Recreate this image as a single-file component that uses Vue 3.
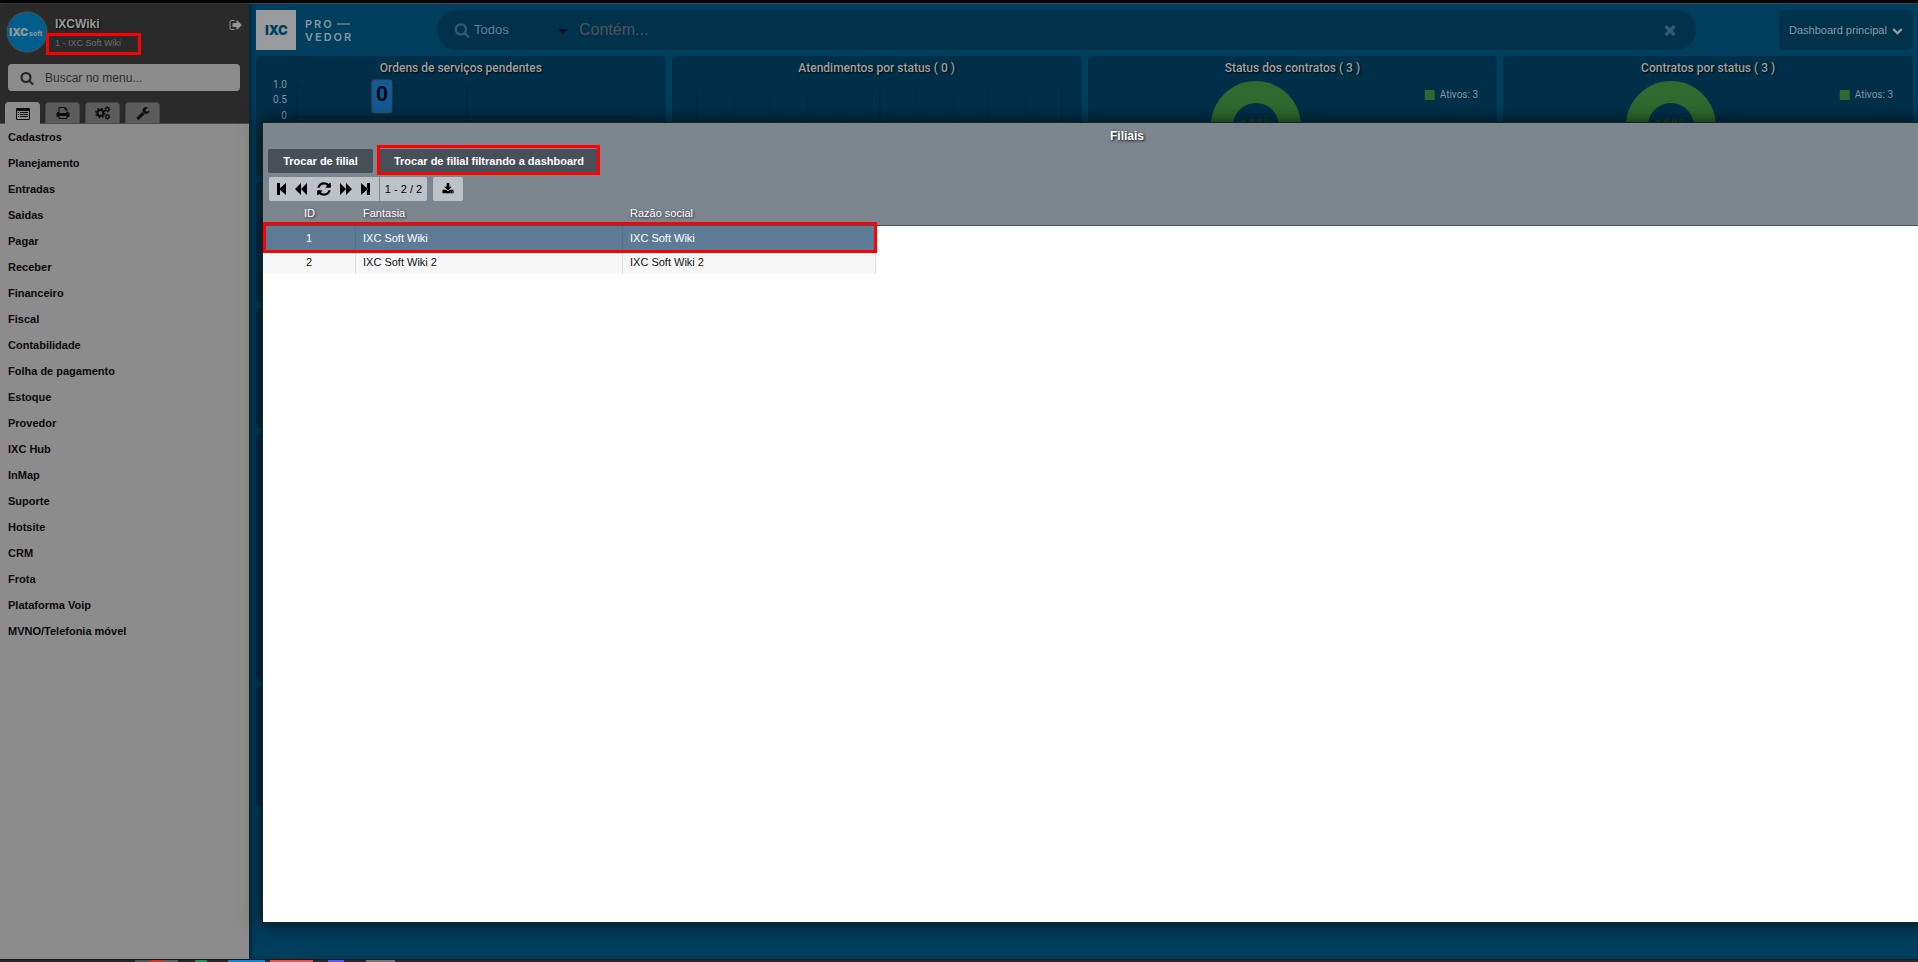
<script setup>
import { ref } from 'vue'

const menu = [
  'Cadastros', 'Planejamento', 'Entradas', 'Saidas', 'Pagar', 'Receber', 'Financeiro',
  'Fiscal', 'Contabilidade', 'Folha de pagamento', 'Estoque', 'Provedor', 'IXC Hub',
  'InMap', 'Suporte', 'Hotsite', 'CRM', 'Frota', 'Plataforma Voip', 'MVNO/Telefonia móvel',
]

const rows = [
  { id: 1, name: 'IXC Soft Wiki', legal: 'IXC Soft Wiki' },
  { id: 2, name: 'IXC Soft Wiki 2', legal: 'IXC Soft Wiki 2' },
]
const selected = ref(1)
const menuQuery = ref('')
const query = ref('')
const donuts = ['Status dos contratos ( 3 )', 'Contratos por status ( 3 )']
const gridLines = [25, 62, 98, 135, 171, 208, 244, 281, 317, 354, 390]
const lowerRows = ['short', 'short', 'tall', 'short']

const icons = {
  search: 'M1216 832q0-185-131.5-316.5t-316.5-131.5-316.5 131.5-131.5 316.5 131.5 316.5 316.5 131.5 316.5-131.5 131.5-316.5zm512 832q0 52-38 90t-90 38q-54 0-90-38l-343-342q-179 124-399 124-143 0-273.5-55.5t-225-150-150-225-55.5-273.5 55.5-273.5 150-225 225-150 273.5-55.5 273.5 55.5 225 150 150 225 55.5 273.5q0 220-124 399l343 343q37 37 37 90z',
  refresh: 'M1639 1056q0 5-1 7-64 268-268 434.5t-478 166.5q-146 0-282.5-55t-243.5-157l-129 129q-19 19-45 19t-45-19-19-45v-448q0-26 19-45t45-19h448q26 0 45 19t19 45-19 45l-137 137q71 66 161 102t187 36q134 0 250-65t186-179q11-17 53-117 8-23 30-23h192q13 0 22.5 9.5t9.5 22.5zm25-800v448q0 26-19 45t-45 19h-448q-26 0-45-19t-19-45 19-45l138-138q-148-137-349-137-134 0-250 65t-186 179q-11 17-53 117-8 23-30 23h-199q-13 0-22.5-9.5t-9.5-22.5v-7q65-268 270-434.5t480-166.5q146 0 284 55.5t245 156.5l130-129q19-19 45-19t45 19 19 45z',
  times: 'M1490 1322q0 40-28 68l-136 136q-28 28-68 28t-68-28l-294-294-294 294q-28 28-68 28t-68-28l-136-136q-28-28-28-68t28-68l294-294-294-294q-28-28-28-68t28-68l136-136q28-28 68-28t68 28l294 294 294-294q28-28 68-28t68 28l136 136q28 28 28 68t-28 68l-294 294 294 294q28 28 28 68z',
  chevron: 'M1683 808l-742 741q-19 19-45 19t-45-19l-742-741q-19-19-19-45.5t19-45.5l166-165q19-19 45-19t45 19l531 531 531-531q19-19 45-19t45 19l166 165q19 19 19 45.5t-19 45.5z',
  print: 'M448 1536h896v-256h-896v256zm0-640h896v-384h-160q-40 0-68-28t-28-68v-160h-640v640zm1152 64q0-26-19-45t-45-19-45 19-19 45 19 45 45 19 45-19 19-45zm128 0v416q0 13-9.5 22.5t-22.5 9.5h-224v160q0 40-28 68t-68 28h-960q-40 0-68-28t-28-68v-160h-224q-13 0-22.5-9.5t-9.5-22.5v-416q0-79 56.5-135.5t135.5-56.5h64v-544q0-40 28-68t68-28h672q40 0 88 20t76 48l152 152q28 28 48 76t20 88v256h64q79 0 135.5 56.5t56.5 135.5z',
  wrench: 'M448 1472q0-26-19-45t-45-19-45 19-19 45 19 45 45 19 45-19 19-45zm644-420l-682 682q-37 37-90 37-52 0-91-37l-106-108q-38-36-38-90 0-53 38-91l681-681q39 98 114.5 173.5t173.5 114.5zm634-435q0 39-23 106-47 134-164.5 217.5t-258.5 83.5q-185 0-316.5-131.5t-131.5-316.5 131.5-316.5 316.5-131.5q58 0 121.5 16.5t107.5 46.5q16 11 16 28t-16 28l-293 169v224l193 107q5-3 79-48.5t135.5-81 70.5-35.5q15 0 23.5 10t8.5 25z',
  signOut: 'M704 1440q0 4 1 20t.5 26.5-3 23.5-10 19.5-20.5 6.5h-320q-119 0-203.5-84.5t-84.5-203.5v-704q0-119 84.5-203.5t203.5-84.5h320q13 0 22.5 9.5t9.5 22.5q0 4 1 20t.5 26.5-3 23.5-10 19.5-20.5 6.5h-320q-66 0-113 47t-47 113v704q0 66 47 113t113 47h312l11.5 1 11.5 3 8 5.5 7 9 2 13.5zm928-544q0 26-19 45l-544 544q-19 19-45 19t-45-19-19-45v-288h-448q-26 0-45-19t-19-45v-384q0-26 19-45t45-19h448v-288q0-26 19-45t45-19 45 19l544 544q19 19 19 45z',
  download: 'M1344 1344q0-26-19-45t-45-19-45 19-19 45 19 45 45 19 45-19 19-45zm256 0q0-26-19-45t-45-19-45 19-19 45 19 45 45 19 45-19 19-45zm128-224v320q0 40-28 68t-68 28h-1472q-40 0-68-28t-28-68v-320q0-40 28-68t68-28h465l135 136q58 56 136 56t136-56l136-136h464q40 0 68 28t28 68zm-325-569q17 41-14 70l-448 448q-18 19-45 19t-45-19l-448-448q-31-29-14-70 17-39 59-39h256v-448q0-26 19-45t45-19h256q26 0 45 19t19 45v448h256q42 0 59 39z',
}
</script>

<template>
  <div class="screen">
    <div class="app">
      <aside class="sidebar">
        <div class="side-head">
          <div class="user">
            <svg class="avatar" viewBox="0 0 42 42" aria-label="IXCsoft">
              <circle cx="21" cy="21" r="20" fill="#005e8c" stroke="#4a5458" stroke-width="1" />
              <text x="3" y="25" class="av-big">IXC</text>
              <text x="23" y="25" class="av-small">soft</text>
            </svg>
            <div class="who">
              <strong>IXCWiki</strong>
              <span class="branch">1 - IXC Soft Wiki<i class="mark mark-branch"></i></span>
            </div>
            <button class="logout" aria-label="Sair">
              <svg width="14" height="14" viewBox="0 0 1792 1792"><path :d="icons.signOut" /></svg>
            </button>
          </div>
          <label class="menu-search">
            <svg width="14" height="14" viewBox="0 0 1792 1792"><path :d="icons.search" /></svg>
            <input v-model="menuQuery" type="text" placeholder="Buscar no menu..." aria-label="Buscar no menu" />
          </label>
          <div class="tabs">
            <button class="tab active" aria-label="Menu">
              <svg width="14" height="12" viewBox="0 0 14 12">
                <rect x="0" y="0" width="14" height="12" rx="1" />
                <path class="cut" d="M1 3h12v8H1z" />
                <path d="M2 4h1v1H2zM4 4h8v1H4zM2 6h1v1H2zM4 6h8v1H4zM2 8h1v1H2zM4 8h8v1H4z" />
              </svg>
            </button>
            <button class="tab" aria-label="Imprimir">
              <svg width="14" height="14" viewBox="0 0 1792 1792"><path :d="icons.print" /></svg>
            </button>
            <button class="tab" aria-label="Configurações">
              <svg width="16" height="14" viewBox="0 0 16 14" fill="none">
                <circle cx="5.4" cy="7" r="3" stroke-width="2.2" />
                <circle cx="5.4" cy="7" r="4.6" stroke-width="1.4" stroke-dasharray="1.8 1.81" />
                <circle cx="12.4" cy="3.2" r="1.6" stroke-width="1.2" />
                <circle cx="12.4" cy="3.2" r="2.5" stroke-width="1" stroke-dasharray="1.3 1.32" />
                <circle cx="12.4" cy="10.8" r="1.6" stroke-width="1.2" />
                <circle cx="12.4" cy="10.8" r="2.5" stroke-width="1" stroke-dasharray="1.3 1.32" />
              </svg>
            </button>
            <button class="tab" aria-label="Ferramentas">
              <svg width="14" height="14" viewBox="0 0 1792 1792"><path :d="icons.wrench" /></svg>
            </button>
          </div>
        </div>
        <nav class="menu">
          <a v-for="item in menu" :key="item" href="#">{{ item }}</a>
        </nav>
      </aside>

      <main class="main">
        <header class="top">
          <svg class="logo" width="100" height="40" viewBox="0 0 100 40" aria-label="IXC Provedor">
            <rect width="40" height="40" fill="#999b9c" />
            <text x="9" y="25" class="logo-ixc">IXC</text>
            <text x="49" y="18" class="logo-word">PRO</text>
            <path d="M81 14h13" stroke="#94a1a9" stroke-width="1" />
            <text x="49" y="31" class="logo-word">VEDOR</text>
          </svg>
          <div class="search">
            <svg width="16" height="16" viewBox="0 0 1792 1792"><path :d="icons.search" /></svg>
            <div class="scope">
              <select aria-label="Filtro"><option>Todos</option></select>
              <i class="caret"></i>
            </div>
            <input v-model="query" type="text" placeholder="Contém..." aria-label="Pesquisar" />
            <button aria-label="Limpar" @click="query = ''">
              <svg width="16" height="16" viewBox="0 0 1792 1792"><path :d="icons.times" /></svg>
            </button>
          </div>
          <div class="board">
            <select aria-label="Dashboard"><option>Dashboard principal</option></select>
            <svg width="11" height="11" viewBox="0 0 1792 1792"><path :d="icons.chevron" /></svg>
          </div>
        </header>

        <div class="cards">
          <section class="card">
            <h2>Ordens de serviços pendentes</h2>
            <svg class="chart" viewBox="0 0 410 90" preserveAspectRatio="xMinYMin meet">
              <g class="grid">
                <path d="M36 5h346M36 21h346" class="faint" />
                <path d="M36 37h346" />
                <path d="M41 5v85M211 5v85" />
              </g>
              <g class="axis">
                <text x="31" y="8">1.0</text>
                <text x="31" y="23">0.5</text>
                <text x="31" y="39">0</text>
              </g>
              <rect x="116" y="0" width="20" height="33" rx="2" fill="#135a98" stroke="#3d4c57" />
              <text x="126" y="21" class="count">0</text>
            </svg>
          </section>
          <section class="card">
            <h2>Atendimentos por status ( 0 )</h2>
            <svg class="chart" viewBox="0 0 410 90" preserveAspectRatio="xMinYMin meet">
              <g class="grid">
                <path v-for="(x, i) in gridLines" :key="x" :d="`M${x} 5v85`" :class="{ faint: i % 5 }" />
              </g>
            </svg>
          </section>
          <section v-for="title in donuts" :key="title" class="card">
            <h2>{{ title }}</h2>
            <svg class="chart" viewBox="0 0 410 90" preserveAspectRatio="xMinYMin meet">
              <circle cx="168" cy="46" r="34" fill="none" stroke="#2f6b2f" stroke-width="22" />
              <text x="168" y="50" class="pct">100%</text>
              <rect x="337" y="10" width="10" height="10" fill="#2f6b2f" />
              <text x="352" y="18" class="legend">Ativos: 3</text>
            </svg>
          </section>
          <template v-for="(size, r) in lowerRows" :key="r">
            <section v-for="c in 4" :key="c" class="card" :class="size"></section>
          </template>
        </div>
      </main>
    </div>

    <section class="dialog" role="dialog" aria-labelledby="dialog-title">
      <div class="dialog-head">
        <h1 id="dialog-title">Filiais</h1>
        <div class="actions">
          <button>Trocar de filial</button>
          <button class="wide">Trocar de filial filtrando a dashboard<i class="mark mark-action"></i></button>
        </div>
        <div class="tools">
          <div class="pager">
            <button aria-label="Primeira"><svg width="10" height="12" viewBox="0 0 10 12"><path d="M0 0h3v12H0zM9 0v12L2 6z" /></svg></button>
            <button aria-label="Anterior"><svg width="13" height="12" viewBox="0 0 13 12"><path d="M6 0v12L0 6zM12 0v12L6 6z" /></svg></button>
            <button aria-label="Atualizar"><svg width="16" height="16" viewBox="0 0 1792 1792"><path :d="icons.refresh" /></svg></button>
            <button aria-label="Próxima"><svg width="13" height="12" viewBox="0 0 13 12"><path d="M1 0v12L7 6zM7 0v12L13 6z" /></svg></button>
            <button aria-label="Última"><svg width="10" height="12" viewBox="0 0 10 12"><path d="M7 0h3v12H7zM1 0v12L8 6z" /></svg></button>
          </div>
          <span class="range">1 - 2 / 2</span>
          <button class="download" aria-label="Baixar">
            <svg width="12" height="12" viewBox="0 0 1792 1792"><path :d="icons.download" /></svg>
          </button>
        </div>
      </div>
      <div class="table-wrap">
        <table>
          <thead>
            <tr><th class="c-id">ID</th><th class="c-name">Fantasia</th><th class="c-legal">Razão social</th></tr>
          </thead>
          <tbody>
            <tr v-for="row in rows" :key="row.id" :class="{ on: selected === row.id }" @click="selected = row.id">
              <td class="c-id">{{ row.id }}<i v-if="row.id === 1" class="mark mark-row"></i></td>
              <td>{{ row.name }}</td>
              <td>{{ row.legal }}</td>
            </tr>
          </tbody>
        </table>
      </div>
    </section>

    <div class="taskbar">
      <i class="t1"></i><i class="t2"></i><i class="t3"></i><i class="t4"></i><i class="t5"></i><i class="t6"></i>
    </div>
  </div>
</template>

<style>
html, body, #app { height: 100%; }
body { overflow: hidden; }
</style>

<style scoped>
* { box-sizing: border-box; }
button, input, select { font: inherit; color: inherit; background: none; border: 0; padding: 0; margin: 0; outline: 0; }
select { appearance: none; }
svg { display: block; fill: currentColor; flex: none; }

.screen {
  position: relative;
  display: flex;
  flex-direction: column;
  height: 100%;
  overflow: hidden;
  border-top: 3px solid #050505;
  background: #003e5d;
  font: 11px/14px "Liberation Sans", Arial, sans-serif;
}
.app { flex: 1; min-height: 0; display: flex; border-top: 1px solid #474747; }

.sidebar {
  position: relative;
  width: 249px;
  flex: none;
  background: #8c8c8c;
  box-shadow: 1px 0 6px rgba(0, 0, 0, .6);
}
.side-head { background: #2a2a2a; border-bottom: 1px solid #4a4a4a; }
.user { display: flex; height: 60px; padding: 7px 6px 0; }
.avatar { width: 42px; height: 42px; }
.av-big { font: 900 11px Inter, sans-serif; fill: #909a9e; }
.av-small { font: 700 7px Inter, sans-serif; fill: #909a9e; }
.who { flex: 1; display: flex; flex-direction: column; padding: 6px 0 0 7px; color: #9a9a9a; }
.who strong { font-size: 12px; line-height: 14px; text-shadow: 1px 1px 2px #000; }
.branch { position: relative; align-self: flex-start; margin-top: 7px; font-size: 9px; line-height: 10px; color: #6d6d6d; }
.mark { position: absolute; pointer-events: none; border: 3px solid #f00; }
.mark-branch { inset: -5px -20px -7px -9px; }
.logout { align-self: flex-start; margin: 7px 0 0; color: #949494; }
.menu-search {
  display: flex;
  align-items: center;
  height: 27px;
  margin: 0 9px 0 8px;
  padding-left: 12px;
  gap: 11px;
  border-radius: 4px;
  background: #8c8c8c;
  color: #222;
}
.menu-search input { flex: 1; min-width: 0; font-size: 12px; }
.menu-search input::placeholder { color: #2c2c2c; opacity: 1; }
.tabs { display: flex; gap: 5px; padding: 11px 5px 0; }
.tab {
  display: grid;
  place-items: center;
  width: 35px;
  height: 21px;
  border: 1px solid #484848;
  border-bottom: 0;
  border-radius: 4px 4px 0 0;
  background: #5c5c5c;
  color: #0c0c0c;
}
.tab svg[fill="none"] { fill: none; stroke: #0c0c0c; }
.tab.active { background: #8c8c8c; border-color: #8c8c8c; height: 22px; margin-bottom: -1px; }
.cut { fill: #8c8c8c; }
.menu { display: flex; flex-direction: column; }
.menu a { padding: 6px 8px; font-weight: 700; color: #0a0a0a; text-decoration: none; }

.main { flex: 1; min-width: 0; padding: 6px 5px 0 7px; }
.top { display: flex; height: 40px; }
.logo-ixc { font: 900 13px Inter, sans-serif; fill: #003e5d; }
.logo-word { font: 600 11px Inter, sans-serif; letter-spacing: 2px; fill: #8796a0; }
.search {
  flex: 1;
  display: flex;
  align-items: center;
  margin: 0 83px 0 81px;
  padding: 0 18px 0 17px;
  border-radius: 20px;
  background: #00324b;
  color: #335a6e;
}
.scope { position: relative; width: 103px; margin: 0 2px 0 4px; font-size: 13px; color: #64808e; }
.scope select { width: 100%; }
.caret { position: absolute; right: 9px; top: 6px; border: 5px solid transparent; border-top-color: #00141f; border-bottom: 0; pointer-events: none; }
.search input { flex: 1; min-width: 0; font-size: 16px; }
.search input::placeholder { color: #515457; opacity: 1; }
.board {
  display: flex;
  align-items: center;
  justify-content: space-between;
  width: 134px;
  padding: 0 10px;
  border-radius: 5px;
  background: #00324b;
  color: #8b9ba4;
}
.board svg { color: #a0a0a0; }

.cards { display: grid; grid-template-columns: repeat(4, 1fr); gap: 6px; margin-top: 6px; }
.card { height: 120px; border-radius: 4px; background: #003049; overflow: hidden; }
.card.tall { height: 246px; }
.card h2 {
  margin: 0;
  height: 24px;
  text-align: center;
  font: 500 12px/24px Roboto, sans-serif;
  color: #a1a1a1;
  text-shadow: 1px 1px 2px #000;
}
.chart { width: 100%; overflow: visible; }
.grid path { stroke: #00263b; stroke-width: 1; }
.grid .faint { stroke: #002c44; }
.axis text { font: 10px Roboto, sans-serif; fill: #8795a0; text-anchor: end; }
.count { font: 700 21px Roboto, sans-serif; fill: #030a12; text-anchor: middle; }
.pct { font: italic 700 14px Roboto, sans-serif; fill: #164a2c; text-anchor: middle; }
.legend { font: 10px Roboto, sans-serif; fill: #8795a0; }

.dialog {
  position: absolute;
  top: 120px;
  right: -73px;
  bottom: 40px;
  left: 263px;
  background: #fff;
  box-shadow: 0 0 0 1px #202020, 0 0 16px 3px rgba(0, 0, 0, .6);
}
.dialog-head { height: 78px; background: #7c868f; }
.dialog h1 {
  margin: 0;
  padding-top: 5px;
  height: 26px;
  text-align: center;
  font-size: 12px;
  line-height: 16px;
  color: #fff;
  text-shadow: 1px 1px 3px #000;
}
.actions { display: flex; gap: 6px; padding-left: 5px; }
.actions button {
  position: relative;
  width: 105px;
  height: 24px;
  border-radius: 2px;
  background: #474f59;
  color: #fff;
  font-weight: 700;
}
.actions .wide { width: 220px; }
.mark-action { inset: -4px -1px -2px -2px; }
.tools { display: flex; height: 24px; margin: 4px 0 0 6px; }
.pager { display: flex; align-items: center; justify-content: space-between; width: 110px; padding: 0 9px 0 8px; background: #bcc2c6; border-radius: 2px 0 0 2px; color: #000; }
.range { width: 47px; margin-left: 1px; line-height: 24px; text-align: center; background: #bcc2c6; border-radius: 0 2px 2px 0; }
.download { display: grid; place-items: center; width: 30px; margin-left: 6px; border-radius: 2px; background: #bcc2c6; color: #000; }
.table-wrap { background: linear-gradient(#7c868f 24px, #474f5b 24px, #474f5b 25px, #fff 25px); }
table { position: relative; width: 613px; table-layout: fixed; border-collapse: separate; border-spacing: 0; }
th { height: 25px; padding: 0 7px 2px; font-weight: 400; text-align: left; color: #fff; text-shadow: 1px 1px 3px rgba(0, 0, 0, .7); }
td { height: 24px; padding: 0 7px; color: #111; background: #f7f7f7; border-right: 1px solid #ddd; }
.c-id { width: 93px; text-align: center; }
.c-name { width: 267px; }
.on td { color: #fff; background: #5e7b95; border-color: #55708a; }
.mark-row { left: 0; right: -1px; top: 21px; height: 31px; }

.taskbar { position: relative; flex: none; display: flex; height: 3px; padding-left: 135px; border-top: 1px solid #1b1b1d; background: #29272a; }
.taskbar i { height: 2px; }
.t1 { width: 43px; background: linear-gradient(90deg, #555 30%, #d0362c 40%, #d0362c 58%, #606060 70%); }
.t2 { width: 12px; margin-left: 17px; background: #2b8a57; }
.t3 { width: 37px; margin-left: 21px; background: #1d83cd; }
.t4 { width: 43px; margin-left: 5px; background: #e94f55; }
.t5 { width: 16px; margin-left: 15px; background: #5b56e8; }
.t6 { width: 29px; margin-left: 22px; background: #777; }
</style>
